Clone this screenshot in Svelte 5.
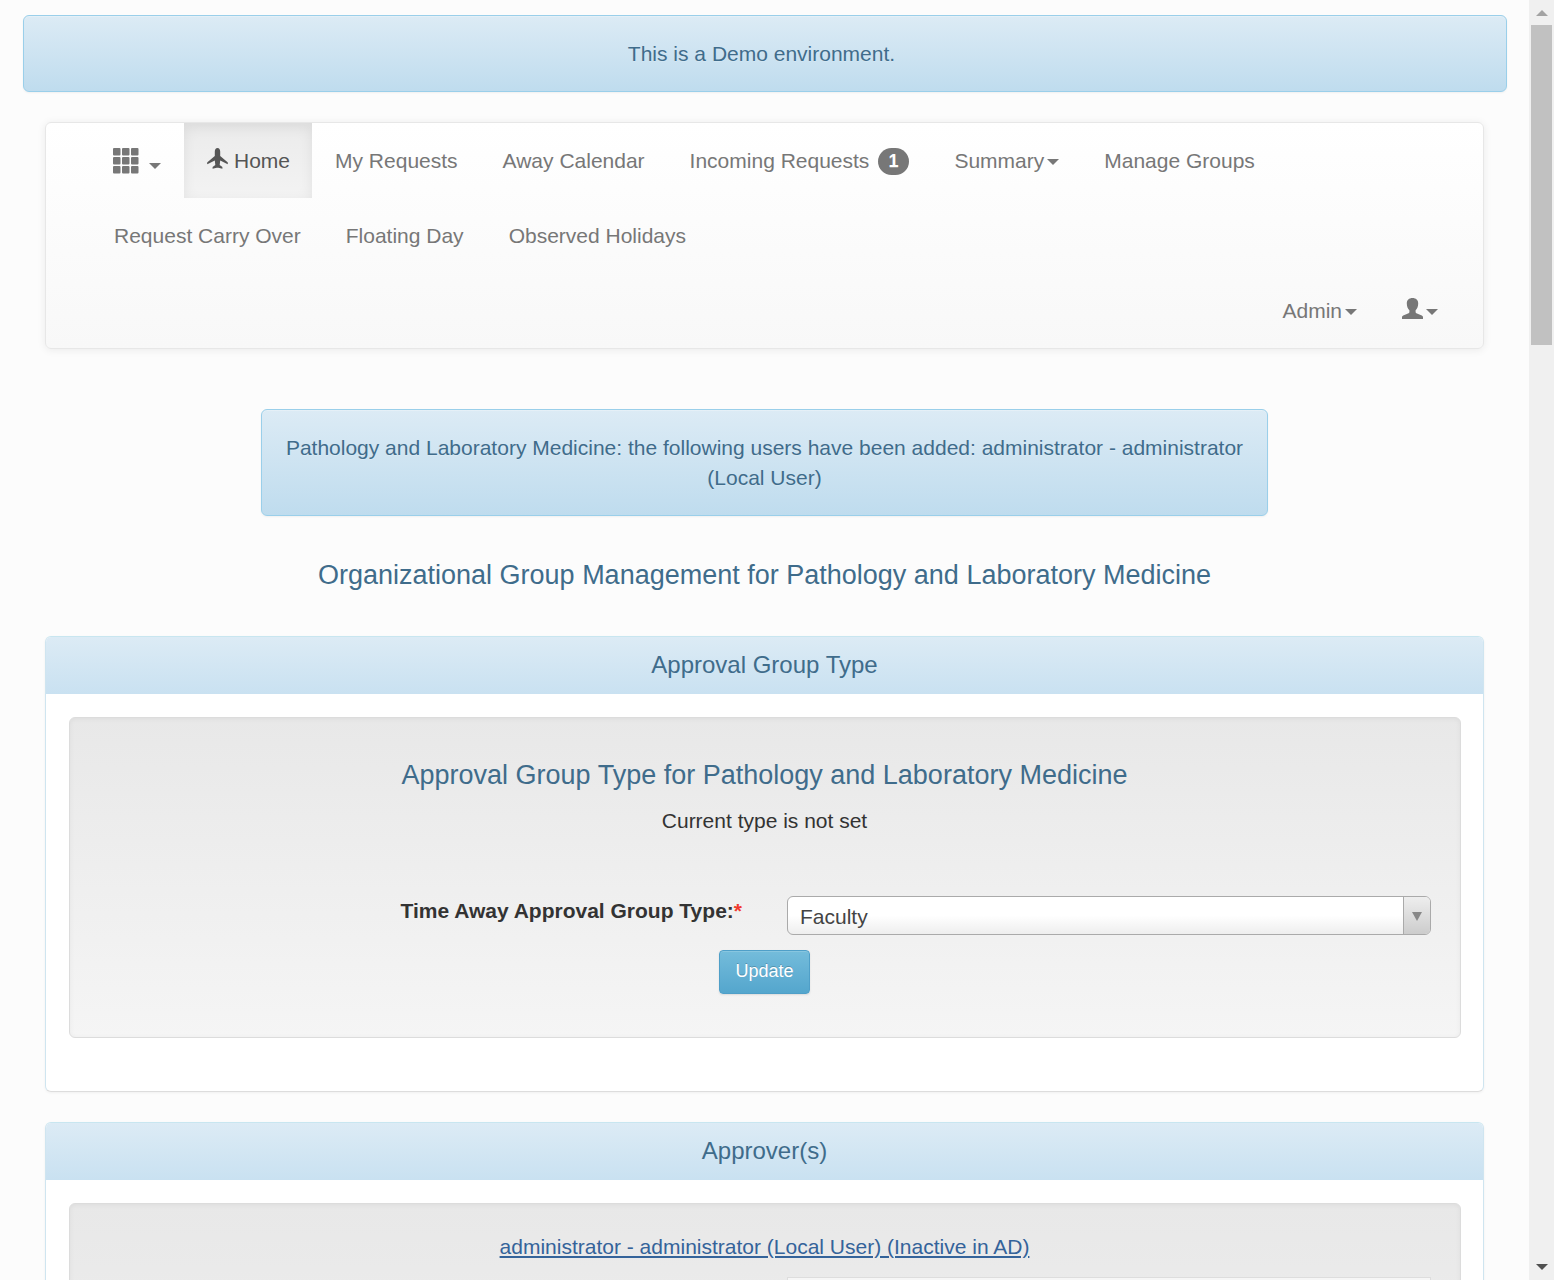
<script>
  const links = ['Request Carry Over', 'Floating Day', 'Observed Holidays'];
  const groupTypes = ['Faculty', 'Fellow', 'Staff'];
  let groupType = $state('Faculty');
</script>

{#snippet caret()}
  <span class="caret" aria-hidden="true"></span>
{/snippet}

<div class="window">
  <div class="page">
    <div class="alert demo" role="status">This is a Demo environment.</div>

    <div class="container">
      <nav class="navbar" aria-label="Main">
        <ul class="menu">
          <li>
            <a href="#apps" class="apps" aria-label="Applications">
              <svg width="26" height="26" viewBox="0 0 26 26" fill="currentColor" aria-hidden="true">
                {#each [0, 9, 18] as y}
                  {#each [0, 9, 18] as x}
                    <rect {x} {y} width="7.5" height="7.5" rx="1" />
                  {/each}
                {/each}
              </svg>
              {@render caret()}
            </a>
          </li>
          <li>
            <a href="#home" class="active" aria-current="page">
              <svg class="plane" width="21" height="21" viewBox="0 0 21 21" fill="currentColor" aria-hidden="true">
                <path d="M10.500 0C8.800 0 7.800 1.600 7.800 3.500V8L.4 14.300C.1 14.600.1 15.500.3 16.300L7.800 12.500 8.300 17l-2.700 2v1.700l4.100-1h1.600l4.100 1V19l-2.700-2 .5-4.500 7.500 3.800c.2-.8.2-1.700-.1-2L13.200 8V3.500C13.200 1.600 12.200 0 10.500 0z" />
              </svg>
              <span>Home</span>
            </a>
          </li>
          <li><a href="#my-requests">My Requests</a></li>
          <li><a href="#calendar">Away Calendar</a></li>
          <li><a href="#incoming">Incoming Requests <span class="badge">1</span></a></li>
          <li><a href="#summary">Summary{@render caret()}</a></li>
          <li><a href="#groups">Manage Groups</a></li>
          {#each links as link}
            <li><a href="#{link.toLowerCase().replaceAll(' ', '-')}">{link}</a></li>
          {/each}
        </ul>
        <ul class="menu right">
          <li><a href="#admin">Admin{@render caret()}</a></li>
          <li>
            <a href="#account" aria-label="Account">
              <svg class="user" width="21" height="21" viewBox="0 0 21 21" fill="currentColor" aria-hidden="true">
                <path d="M10.500 0C7 0 4.800 2.100 4.800 5.300c0 3.200 1 5.600 2.600 7v1.800c0 .5-.3.900-.8 1.100L1.200 17.400C.4 17.800 0 18.300 0 19v2h21v-2c0-.7-.4-1.200-1.200-1.600l-5.400-2.200c-.5-.2-.8-.6-.8-1.100v-1.800c1.600-1.400 2.600-3.800 2.600-7C16.200 2.100 14 0 10.500 0z" />
              </svg>{@render caret()}
            </a>
          </li>
        </ul>
      </nav>

      <div class="alert notice" role="status">
        Pathology and Laboratory Medicine: the following users have been added: administrator - administrator (Local User)
      </div>

      <h1>Organizational Group Management for Pathology and Laboratory Medicine</h1>

      <section class="panel">
        <h2>Approval Group Type</h2>
        <div class="body">
          <div class="well">
            <h3>Approval Group Type for Pathology and Laboratory Medicine</h3>
            <p>Current type is not set</p>
            <form onsubmit={(e) => e.preventDefault()}>
              <div class="field">
                <label for="group-type">Time Away Approval Group Type:<span class="required">*</span></label>
                <div class="combo">
                  <select id="group-type" bind:value={groupType}>
                    {#each groupTypes as type}
                      <option>{type}</option>
                    {/each}
                  </select>
                  <span class="arrow" aria-hidden="true">
                    <svg width="10" height="9" viewBox="0 0 10 9" fill="#888"><path d="M0 0h10L5 9z" /></svg>
                  </span>
                </div>
              </div>
              <button type="submit">Update</button>
            </form>
          </div>
        </div>
      </section>

      <section class="panel">
        <h2>Approver(s)</h2>
        <div class="body">
          <div class="well people">
            <a class="person" href="#administrator">administrator - administrator (Local User) (Inactive in AD)</a>
            <div class="field">
              <span></span>
              <input type="text" aria-label="Approver roles" />
            </div>
          </div>
        </div>
      </section>
    </div>
  </div>

  <div class="scrollbar" aria-hidden="true">
    <svg width="12" height="6" viewBox="0 0 12 6" fill="#a3a3a3"><path d="M6 0l6 6H0z" /></svg>
    <div class="track"><div class="thumb"></div></div>
    <svg width="12" height="6" viewBox="0 0 12 6" fill="#505050"><path d="M0 0h12L6 6z" /></svg>
  </div>
</div>

<style>
  :global(body) {
    margin: 0;
    background: #fcfcfc;
  }

  .window {
    display: grid;
    grid-template-columns: minmax(0, 1fr) 25px;
    height: 100vh;
    overflow: hidden;
    color: #333;
    font: 21px/30px "Liberation Sans", Arial, sans-serif;
  }

  .window * {
    box-sizing: border-box;
  }

  .page {
    min-height: 0;
    overflow: hidden;
    padding: 15px 22px 0 23px;
  }

  .alert {
    padding: 23px 22px 22px;
    border: 1px solid #9acfea;
    border-radius: 6px;
    background: linear-gradient(#dcebf5, #bfdcee);
    box-shadow: inset 0 1px 0 rgba(255, 255, 255, 0.25), 0 1px 2px rgba(0, 0, 0, 0.05);
    color: #3f6c8b;
    text-align: center;
    text-shadow: 0 1px 0 rgba(255, 255, 255, 0.2);
  }

  .demo {
    padding-right: 29px;
  }

  .container {
    padding: 30px 23px 0 22px;
  }

  .navbar {
    padding: 0 23px 0 45px;
    border: 1px solid #e7e7e7;
    border-radius: 6px;
    background: linear-gradient(#fff, #f8f8f8);
    box-shadow: 0 1px 8px rgba(0, 0, 0, 0.075);
  }

  .menu {
    display: flex;
    flex-wrap: wrap;
    margin: 0;
    padding: 0;
    list-style: none;
  }

  .right {
    justify-content: flex-end;
  }

  .menu a {
    display: flex;
    align-items: center;
    height: 75px;
    padding: 0 22px 0 23px;
    color: #777;
    text-decoration: none;
    text-shadow: 0 1px 0 rgba(255, 255, 255, 0.25);
  }

  .menu .apps {
    gap: 7px;
    padding: 0 23px 0 22px;
  }

  .menu .active {
    gap: 6px;
    background: linear-gradient(#ebebeb, #f3f3f3);
    box-shadow: inset 0 4px 13px rgba(0, 0, 0, 0.075);
    color: #555;
  }

  .caret {
    margin: 2px 0 0 3px;
    border: 6px solid transparent;
    border-top-color: currentColor;
    border-bottom: 0;
  }

  .apps .caret {
    margin-top: 10px;
  }

  .plane,
  .user {
    margin-bottom: 4px;
  }

  .badge {
    margin: 2px 0 0 9px;
    padding: 4px 11px 4px 10px;
    border-radius: 15px;
    background: #777;
    color: #fff;
    font-size: 18px;
    font-weight: 700;
    line-height: 19px;
  }

  .notice {
    width: 70%;
    margin: 60px auto 44px;
  }

  h1,
  h2,
  h3 {
    margin: 0;
    color: #3f6c8b;
    font-weight: 400;
    text-align: center;
  }

  h1,
  h3 {
    font-size: 27px;
    line-height: 30px;
  }

  h1 {
    margin-bottom: 46px;
  }

  .panel {
    margin-bottom: 30px;
    border: 1px solid;
    border-color: #c8e6f0 #cfe5f0 #ddd;
    border-radius: 6px;
    background: #fff;
    box-shadow: 0 1px 3px rgba(0, 0, 0, 0.05);
  }

  h2 {
    padding: 14px 22px 16px;
    border-radius: 5px 5px 0 0;
    background: linear-gradient(#dcebf5, #c9e1f1);
    font-size: 24px;
    line-height: 27px;
  }

  .body {
    padding: 23px 22px 53px 23px;
  }

  .well {
    padding: 42px 29px 43px 28px;
    border: 1px solid #dcdcdc;
    border-radius: 6px;
    background: linear-gradient(#e8e8e8, #f5f5f5);
    box-shadow: inset 0 1px 5px rgba(0, 0, 0, 0.05);
    text-align: center;
  }

  .people {
    padding-top: 28px;
    padding-bottom: 300px;
  }

  .well p {
    margin: 16px 0 60px;
  }

  .field {
    display: grid;
    grid-template-columns: 1fr 1fr;
    gap: 45px;
  }

  label {
    font-weight: 700;
    text-align: right;
  }

  .required {
    color: #f03a2e;
  }

  .combo {
    display: grid;
    grid-template-columns: 1fr 27px;
    height: 39px;
    overflow: hidden;
    border: 1px solid #aaa;
    border-radius: 6px;
    background: linear-gradient(#fff 50%, #eee);
  }

  select {
    grid-area: 1 / 1 / 2 / 3;
    appearance: none;
    width: 100%;
    padding: 3px 40px 0 12px;
    border: 0;
    background: none;
    color: #444;
    font: inherit;
  }

  .arrow {
    grid-area: 1 / 2;
    display: grid;
    place-items: center;
    padding-top: 2px;
    border-left: 1px solid #aaa;
    background: linear-gradient(#eee, #ccc);
    pointer-events: none;
  }

  button {
    height: 44px;
    margin-top: 15px;
    padding: 0 15px 2px;
    border: 1px solid #4f9fc8;
    border-radius: 4px;
    background: linear-gradient(#74bcdb, #54a6cd);
    box-shadow: inset 0 1px 0 rgba(255, 255, 255, 0.15), 0 1px 2px rgba(0, 0, 0, 0.1);
    color: #fff;
    font: 18px/27px "Liberation Sans", Arial, sans-serif;
    text-shadow: 0 -1px 0 rgba(0, 0, 0, 0.2);
  }

  .person {
    display: block;
    margin-bottom: 15px;
    color: #34639a;
    text-decoration: underline;
  }

  input {
    width: 100%;
    height: 46px;
    border: 1px solid #ddd;
    background: #f6f6f6;
    font: inherit;
  }

  .scrollbar {
    display: flex;
    flex-direction: column;
    align-items: center;
    padding: 10px 0;
    background: #f0f0f0;
  }

  .track {
    flex: 1;
    padding-top: 9px;
  }

  .thumb {
    width: 21px;
    height: 25.8%;
    background: #c1c1c1;
  }
</style>
